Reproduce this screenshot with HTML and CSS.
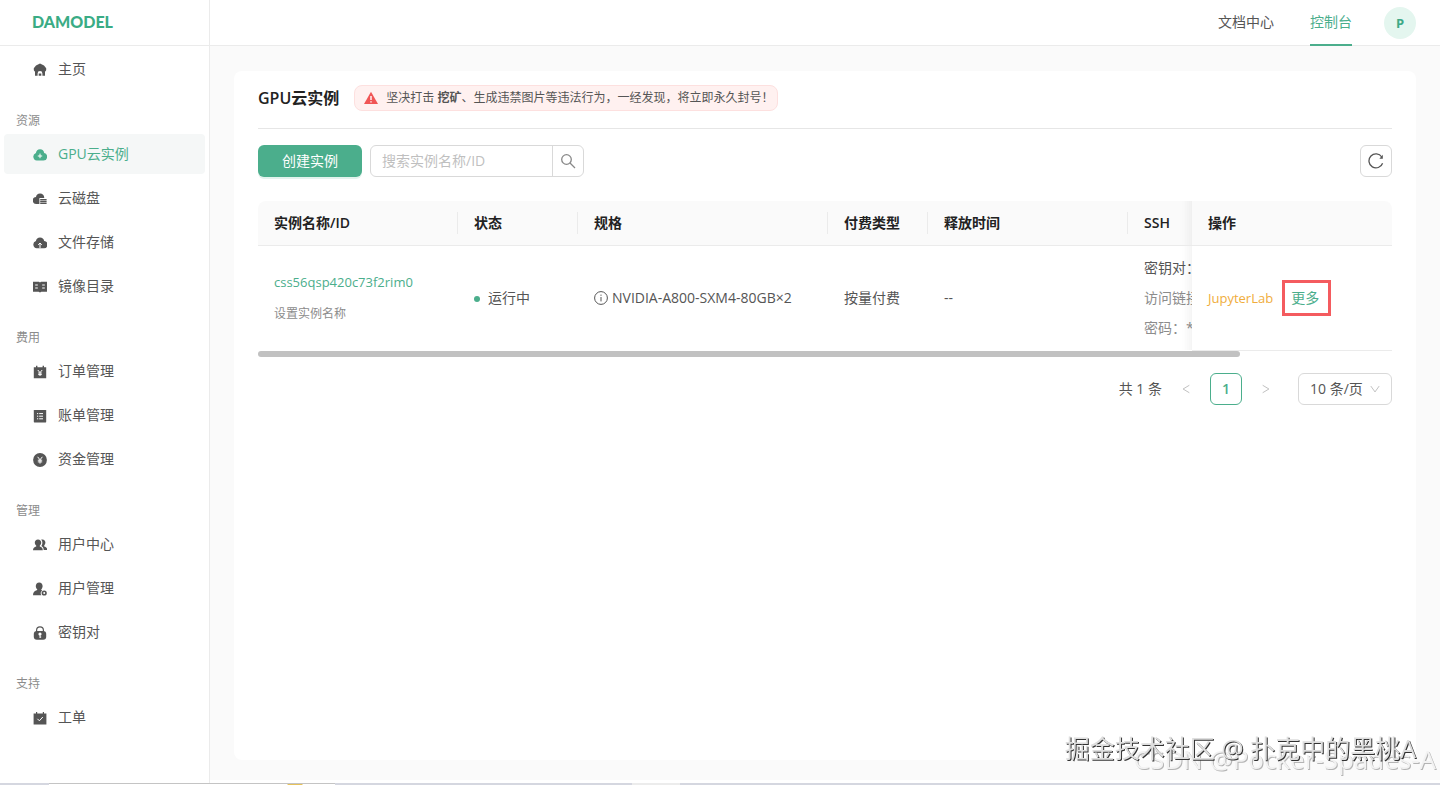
FILE: index.html
```html
<!DOCTYPE html>
<html lang="zh-CN">
<head>
  <meta charset="UTF-8">
  <meta name="viewport" content="width=device-width, initial-scale=1.0">
  <title>DAMODEL - GPU云实例</title>
  <link rel="stylesheet" href="styles.css">
</head>
<body>
  <div class="layout">
    <aside class="sidebar">
      <a class="logo" href="#">DAMODEL</a>
      <nav class="menu">
        <a class="menu-item" href="#">
          <svg class="icon" viewBox="0 0 14 14"><path fill-rule="evenodd" d="M7 .4 3 2.400.8 5.200v1.600c0 .8.4 1.400 1.200 1.600v4.400h2.600v-2.400a2.400 2.400 0 0 1 4.800 0v2.400H12V8.400c.8-.2 1.200-.8 1.200-1.600V5.200L11 2.400zM5.700 10.400h2.600v2.400H5.700z"/></svg>
          主页
        </a>
        <h2 class="menu-group">资源</h2>
        <a class="menu-item active" href="#">
          <svg class="icon" viewBox="0 0 14 14"><path d="M7 1.200a4.400 4.400 0 0 0-4.100 3.700A4 4 0 0 0 3.700 12.600h6.800a3.800 3.800 0 0 0 .7-7.500A4.400 4.400 0 0 0 7 1.200z"/><path class="cut" d="M7 5.600v4.600M4.800 8h4.400"/></svg>
          GPU云实例
        </a>
        <a class="menu-item" href="#">
          <svg class="icon" viewBox="0 0 14 14"><path d="M7 1.400a4.200 4.200 0 0 0-4 3.600A3.500 3.500 0 0 0 3.500 12h2.900V6h4.800A4.200 4.200 0 0 0 7 1.400z"/><path d="M7.200 7h6.400v1.400H7.200zM7.200 9h6.400v1.200H7.200zM7.200 10.800h6.400V12H7.200z"/></svg>
          云磁盘
        </a>
        <a class="menu-item" href="#">
          <svg class="icon" viewBox="0 0 14 14"><path d="M7 1.400A4.400 4.400 0 0 0 2.900 5 3.700 3.700 0 0 0 3.700 12.200h6.800A3.600 3.600 0 0 0 11.200 5 4.400 4.400 0 0 0 7 1.400z"/><path class="cut" d="M7 12.200V7M5.200 8.800 7 7l1.800 1.800"/></svg>
          文件存储
        </a>
        <a class="menu-item" href="#">
          <svg class="icon" viewBox="0 0 14 14"><path d="M0 1.800h6l1 .6 1-.6h6v10H8.400L7 12.600l-1.400-.8H0z"/><path class="cut" d="M2.200 5h2.600M2.200 8h2.600M9.200 5h2.600M9.200 8h2.600"/></svg>
          镜像目录
        </a>
        <h2 class="menu-group">费用</h2>
        <a class="menu-item" href="#">
          <svg class="icon" viewBox="0 0 14 14"><path d="M.8 2.200H3V.8h1.400v1.400h5.200V.8H11v1.400h2.200v11H.8z"/><path class="cut" d="m4.800 5 2.200 2.600L9.200 5M7 7.600V11M5.200 8h3.600M5.200 9.600h3.600"/></svg>
          订单管理
        </a>
        <a class="menu-item" href="#">
          <svg class="icon" viewBox="0 0 14 14"><rect x=".8" y="1" width="12.400" height="12.400" rx=".6"/><path class="cut" d="M4 4.600h1.200M6.200 4.600H10M4 7.200h1.200M6.200 7.200H10M4 9.800h1.200M6.200 9.800H10"/></svg>
          账单管理
        </a>
        <a class="menu-item" href="#">
          <svg class="icon" viewBox="0 0 14 14"><circle cx="7" cy="7" r="6.900"/><path class="cut" d="m4.600 3.800 2.400 3 2.400-3M7 6.800v3.800M4.800 7.200h4.400M4.800 8.900h4.400"/></svg>
          资金管理
        </a>
        <h2 class="menu-group">管理</h2>
        <a class="menu-item" href="#">
          <svg class="icon" viewBox="0 0 14 14"><path d="M5 1.400c2 0 3.200 1.400 3.200 3.200 0 1.300-.6 2.400-1.400 3v.8c1.800.6 3 1.400 3 3.800H0c0-2.400 1.400-3.200 3.200-3.800v-.8c-.8-.6-1.400-1.700-1.400-3C1.800 2.800 3 1.400 5 1.400z"/><path d="M8.200 1.600c.3-.2.800-.2 1.200-.2 1.900 0 3 1.400 3 3.200 0 1.200-.5 2.200-1.200 2.800v1c1.800.5 3 1.400 3.100 3.600h-3.600c0-2-.9-3.200-2.300-4 .6-.8 1-1.900 1-3.200 0-1.300-.4-2.400-1.200-3.200z"/></svg>
          用户中心
        </a>
        <a class="menu-item" href="#">
          <svg class="icon" viewBox="0 0 14 14"><path d="M6.200.4c2.100 0 3.400 1.500 3.400 3.600 0 1.400-.5 2.500-1.300 3.300v.6l1 .5a3.300 3.300 0 0 0-1 4.800H0c0-3.200 1.600-4.400 4.200-5.300v-.6C3.300 6.500 2.800 5.400 2.800 4 2.800 1.900 4.100.4 6.200.4z"/><circle class="ring" cx="11.200" cy="11" r="1.800"/></svg>
          用户管理
        </a>
        <a class="menu-item" href="#">
          <svg class="icon" viewBox="0 0 14 14"><path class="ring thin" d="M3.600 6V4.200a3.400 3.400 0 0 1 6.800 0V6"/><rect x=".8" y="5" width="12.400" height="8.800" rx="3"/><circle class="hole" cx="7" cy="8" r="1.600"/><path class="cut" d="M7 8v4M7 11h1.200"/></svg>
          密钥对
        </a>
        <h2 class="menu-group">支持</h2>
        <a class="menu-item" href="#">
          <svg class="icon" viewBox="0 0 14 14"><path d="M.6 2.400H3V1h1.200v1.400h5.600V1H11v1.400h2.400v11H.6z"/><path class="cut" d="m4.400 7.800 2 2L9.800 6"/></svg>
          工单
        </a>
      </nav>
    </aside>

    <div class="main">
      <header class="topbar">
        <a class="top-link" href="#">文档中心</a>
        <a class="top-link active" href="#">控制台</a>
        <button class="avatar" type="button">P</button>
      </header>

      <main class="content">
        <section class="card">
          <div class="card-head">
            <h1>GPU云实例</h1>
            <p class="notice">
              <svg class="notice-icon" viewBox="0 0 14 14"><path d="M7 .8 14 13H0z"/><path class="mark" d="M7 5v4M7 10.200v1.400"/></svg>
              <span>坚决打击 <b>挖矿</b>、生成违禁图片等违法行为，一经发现，将立即永久封号！</span>
            </p>
          </div>

          <div class="toolbar">
            <button class="btn-create" type="button">创建实例</button>
            <form class="search">
              <input type="text" placeholder="搜索实例名称/ID" aria-label="搜索实例名称/ID">
              <button type="button" aria-label="搜索">
                <svg viewBox="0 0 16 16"><circle cx="6.500" cy="6.500" r="4.800"/><path d="m10 10 5 5"/></svg>
              </button>
            </form>
            <button class="btn-refresh" type="button" aria-label="刷新">
              <svg viewBox="0 0 16 16"><path d="M14.600 10.200A7 7 0 1 1 13.800 4"/><path class="head" d="M14.800 1.800v4h-3.400z"/></svg>
            </button>
          </div>

          <div class="table-wrap">
            <table>
              <colgroup>
                <col class="w-name"><col class="w-state"><col class="w-spec"><col class="w-pay"><col class="w-time"><col class="w-ssh"><col class="w-action">
              </colgroup>
              <thead>
                <tr>
                  <th>实例名称/ID</th>
                  <th>状态</th>
                  <th>规格</th>
                  <th>付费类型</th>
                  <th>释放时间</th>
                  <th>SSH</th>
                  <th class="fixed">操作</th>
                </tr>
              </thead>
              <tbody>
                <tr>
                  <td>
                    <a class="instance-id" href="#">css56qsp420c73f2rim0</a>
                    <button class="set-name" type="button">设置实例名称</button>
                  </td>
                  <td><span class="dot"></span>运行中</td>
                  <td>
                    <span class="spec">
                      <svg viewBox="0 0 14 14"><circle cx="7" cy="7" r="6.400"/><path d="M7 6v4.400M7 3.600v1.200"/></svg>
                      NVIDIA-A800-SXM4-80GB×2
                    </span>
                  </td>
                  <td>按量付费</td>
                  <td>--</td>
                  <td class="ssh">
                    <p class="key">密钥对：</p>
                    <p>访问链接：</p>
                    <p>密码：******</p>
                  </td>
                  <td class="fixed">
                    <div class="actions">
                      <a class="jupyter" href="#">JupyterLab</a>
                      <button class="more" type="button">更多</button>
                    </div>
                  </td>
                </tr>
              </tbody>
            </table>
          </div>
          <div class="scrollbar"></div>

          <div class="pagination">
            <span>共 1 条</span>
            <button class="page-arrow" type="button" aria-label="上一页"><svg viewBox="0 0 12 12"><path d="M10 1.500 2.500 6 10 10.500"/></svg></button>
            <button class="page active" type="button">1</button>
            <button class="page-arrow" type="button" aria-label="下一页"><svg viewBox="0 0 12 12"><path d="M2 1.500 9.500 6 2 10.500"/></svg></button>
            <div class="page-size">
              <select aria-label="每页条数">
                <option>10 条/页</option>
                <option>20 条/页</option>
                <option>50 条/页</option>
              </select>
              <svg viewBox="0 0 12 12"><path d="m1 2.500 5 7 5-7"/></svg>
            </div>
          </div>
        </section>
      </main>
    </div>
  </div>

  <div class="taskbar">
    <span class="task-start"></span>
    <span class="task-window"></span>
    <span class="task-gap"></span>
    <span class="task-light"></span>
  </div>

  <div class="watermark csdn">CSDN @Pocker-Spades-A</div>
  <div class="watermark juejin">掘金技术社区 @ 扑克中的黑桃A</div>
</body>
</html>
```
FILE: styles.css
```css
:root {
  --primary: #4bae8c;
  --text: #555;
  --text-dark: #222;
  --text-light: #8c8c8c;
  --line: #ebebeb;
  --bg: #fafafa;
}

* {
  box-sizing: border-box;
}

body {
  margin: 0;
  min-height: 100vh;
  display: flex;
  flex-direction: column;
  font-family: "Open Sans", "Noto Sans CJK SC", sans-serif;
  font-size: 14px;
  line-height: 22px;
  color: var(--text);
  background: #fff;
}

h1, h2, p {
  margin: 0;
}

a {
  color: inherit;
  text-decoration: none;
}

button, input, select {
  font: inherit;
  color: inherit;
  padding: 0;
  border: 0;
  background: none;
}

button {
  cursor: pointer;
}

.layout {
  flex: 1;
  display: flex;
}

/* sidebar */
.sidebar {
  flex: 0 0 210px;
  border-right: 1px solid var(--line);
}

.logo {
  display: block;
  height: 46px;
  padding-left: 32px;
  border-bottom: 1px solid var(--line);
  font-family: Lato, sans-serif;
  font-size: 16px;
  font-weight: 900;
  line-height: 44px;
  color: #3aac85;
}

.menu {
  padding: 3px 4px 0;
}

.menu-item {
  display: flex;
  align-items: center;
  gap: 11px;
  height: 40px;
  margin-bottom: 4px;
  padding-left: 29px;
  border-radius: 4px;
}

.menu-item.active {
  color: var(--primary);
  background: #f5f7f7;
}

.menu-group {
  padding: 19px 12px 4px;
  font-size: 12px;
  font-weight: 400;
  line-height: 18px;
  color: var(--text-light);
}

.icon {
  width: 14px;
  height: 14px;
  margin-top: 2px;
  fill: currentColor;
}

.icon .cut {
  fill: none;
  stroke: #fff;
  stroke-width: 1;
}

.icon .hole {
  fill: #fff;
}

.icon .ring {
  fill: none;
  stroke: currentColor;
  stroke-width: 1.6;
}

.icon .thin {
  stroke-width: 1.2;
}

/* top bar */
.main {
  flex: 1;
  min-width: 0;
  display: flex;
  flex-direction: column;
}

.topbar {
  display: flex;
  justify-content: flex-end;
  height: 46px;
  padding-right: 24px;
  border-bottom: 1px solid var(--line);
}

.top-link {
  height: 46px;
  margin-right: 36px;
  line-height: 44px;
}

.top-link.active {
  margin-right: 32px;
  color: var(--primary);
  border-bottom: 2px solid var(--primary);
}

.avatar {
  width: 32px;
  height: 32px;
  margin-top: 7px;
  border-radius: 50%;
  font-size: 13px;
  font-weight: 700;
  color: #3fa986;
  background: #e4f6ef;
}

/* content */
.content {
  flex: 1;
  display: flex;
  margin-bottom: 3px;
  padding: 25px 24px 20px;
  background: var(--bg);
}

.card {
  flex: 1;
  min-width: 0;
  padding: 14px 24px 24px;
  border-radius: 8px;
  background: #fff;
}

.card-head {
  display: flex;
  align-items: center;
  gap: 15px;
  padding-bottom: 17px;
  border-bottom: 1px solid #e6e6e6;
}

h1 {
  font-size: 16px;
  font-weight: 600;
  line-height: 24px;
  color: var(--text-dark);
}

.notice {
  display: flex;
  align-items: center;
  gap: 8px;
  padding: 2px 3px 2px 9px;
  border: 1px solid #fde0df;
  border-radius: 8px;
  font-size: 12px;
  line-height: 20px;
  background: #fff1f0;
}

.notice-icon {
  width: 14px;
  height: 14px;
  fill: #f05656;
}

.notice-icon .mark {
  fill: none;
  stroke: #fff;
  stroke-width: 1.4;
}

.toolbar {
  display: flex;
  gap: 8px;
  padding: 16px 0 24px;
}

.btn-create {
  width: 104px;
  height: 32px;
  border-radius: 6px;
  color: #fff;
  background: var(--primary);
  box-shadow: 0 2px 0 #e3f3ed;
}

.search {
  display: flex;
  width: 214px;
  height: 32px;
  border: 1px solid #d9d9d9;
  border-radius: 6px;
}

.search input {
  flex: 1;
  min-width: 0;
  padding: 0 11px;
  outline: 0;
}

.search input::placeholder {
  color: #bfbfbf;
}

.search button {
  width: 31px;
  border-left: 1px solid #d9d9d9;
}

.search svg,
.btn-refresh svg {
  display: block;
  width: 16px;
  height: 16px;
  margin: 0 auto;
  fill: none;
  stroke: #888;
  stroke-width: 1.3;
}

.btn-refresh {
  width: 32px;
  height: 32px;
  margin-left: auto;
  border: 1px solid #d9d9d9;
  border-radius: 6px;
}

.btn-refresh svg {
  stroke: #555;
}

.btn-refresh .head {
  fill: #555;
  stroke: none;
}

/* table */
.table-wrap {
  overflow: hidden;
  border-radius: 8px 8px 0 0;
}

table {
  width: 1310px;
  table-layout: fixed;
  border-collapse: separate;
  border-spacing: 0;
}

.w-name, .w-time, .w-action { width: 200px; }
.w-state { width: 120px; }
.w-spec { width: 250px; }
.w-pay { width: 100px; }
.w-ssh { width: 240px; }

th, td {
  position: relative;
  padding: 0 16px;
  text-align: left;
  white-space: nowrap;
}

th {
  height: 45px;
  font-weight: 600;
  color: var(--text-dark);
  background: var(--bg);
  border-bottom: 1px solid var(--line);
}

th:not(.fixed)::after {
  content: "";
  position: absolute;
  top: 11px;
  right: 0;
  width: 1px;
  height: 22px;
  background: var(--line);
}

td {
  height: 105px;
  border-bottom: 1px solid #fff;
}

.fixed {
  position: sticky;
  right: 0;
  z-index: 1;
}

.fixed::before {
  content: "";
  position: absolute;
  top: 0;
  bottom: 0;
  left: -10px;
  width: 10px;
  background: linear-gradient(to left, rgba(0, 0, 0, 0.04), rgba(0, 0, 0, 0));
}

td.fixed {
  background: #fff;
  border-bottom-color: var(--line);
}

.instance-id {
  display: block;
  font-size: 13px;
  line-height: 32px;
  color: var(--primary);
}

.set-name {
  display: block;
  font-size: 12px;
  line-height: 32px;
  color: var(--text-light);
}

.dot {
  display: inline-block;
  width: 6px;
  height: 6px;
  margin-right: 8px;
  border-radius: 50%;
  vertical-align: middle;
  background: var(--primary);
}

.spec {
  display: flex;
  align-items: center;
  gap: 4px;
}

.spec svg {
  width: 14px;
  height: 14px;
  fill: none;
  stroke: #555;
}

.ssh p {
  line-height: 30px;
  color: var(--text-light);
}

.ssh .key {
  color: var(--text);
}

.actions {
  display: flex;
  align-items: center;
  gap: 18px;
}

.jupyter {
  font-size: 13px;
  color: #f0ad3c;
}

.more {
  position: relative;
  color: var(--primary);
}

.more::after {
  content: "";
  position: absolute;
  inset: -7px -12px -7px -9px;
  border: 3px solid #f45b5f;
}

.scrollbar {
  width: 86.6%;
  height: 6px;
  border-radius: 3px;
  background: #c1c1c1;
}

/* pagination */
.pagination {
  display: flex;
  justify-content: flex-end;
  align-items: center;
  gap: 8px;
  margin-top: 16px;
}

.page, .page-arrow {
  width: 32px;
  height: 32px;
}

.page.active {
  border: 1px solid var(--primary);
  border-radius: 6px;
  font-weight: 600;
  color: var(--primary);
}

.pagination svg {
  width: 10px;
  height: 10px;
  fill: none;
  stroke: #b5b5b5;
}

.page-size {
  position: relative;
  margin-left: 8px;
}

.page-size select {
  appearance: none;
  width: 94px;
  height: 32px;
  padding: 0 11px;
  border: 1px solid #d9d9d9;
  border-radius: 6px;
}

.page-size svg {
  position: absolute;
  top: 11px;
  right: 12px;
  pointer-events: none;
}

/* strip along the bottom of the window */
.taskbar {
  display: flex;
  height: 2px;
  background: #d5d7e0;
}

.task-start { width: 49px; }

.task-window {
  width: 286px;
  border-top: 1px solid #c4c4c4;
  background: radial-gradient(circle at 246px 0, #e6c25c 7px, #fff 8px);
}

.task-gap { width: 297px; }

.task-light {
  width: 48px;
  background: #ececec;
}

/* watermarks */
.watermark {
  position: fixed;
  line-height: 32px;
  white-space: nowrap;
  pointer-events: none;
}

.juejin {
  right: 24px;
  bottom: 21px;
  z-index: 3;
  font-size: 25px;
  color: #dedede;
  text-shadow: 1px 1px 0 #333;
}

.csdn {
  right: 4px;
  bottom: 10px;
  z-index: 2;
  font-size: 26px;
  color: #f2f2f2;
  text-shadow: 1px 1px 0 #b4b4b4;
}
```
